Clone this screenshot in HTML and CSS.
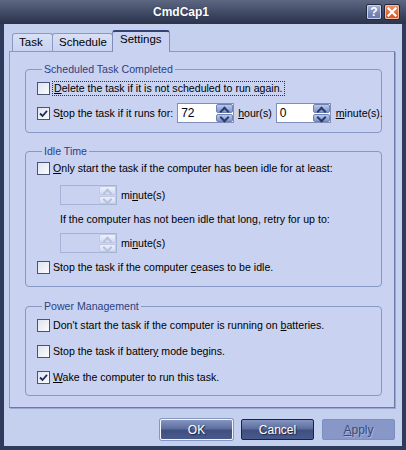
FILE: index.html
```html
<!DOCTYPE html>
<html>
<head>
<meta charset="utf-8">
<link rel="stylesheet" href="styles.css">
</head>
<body>
<div class="window">
  <div class="titlebar">
    <div class="title">CmdCap1</div>
    <div class="tb-buttons">
      <span class="tb-btn help">?</span>
      <span class="tb-btn close"><svg width="10" height="10" viewBox="0 0 10 10"><path d="M1.5 1.5 L8.5 8.5 M8.5 1.5 L1.5 8.5" stroke="#fff" stroke-width="2.2" stroke-linecap="square"/></svg></span>
    </div>
  </div>
  <div class="client">
    <div class="tabs">
      <div class="tab">Task</div>
      <div class="tab">Schedule</div>
      <div class="tab active">Settings</div>
    </div>
    <div class="panel">
      <fieldset class="group g1">
        <legend>Scheduled Task Completed</legend>
        <div class="row r-first">
          <span class="cb"></span><span class="label focus"><u>D</u>elete the task if it is not scheduled to run again.</span>
        </div>
        <div class="row r-spin">
          <span class="cb checked"><svg width="9" height="9" viewBox="0 0 9 9"><path d="M1 4.5 L3.5 7 L8 1.8" fill="none" stroke="#1e2f5e" stroke-width="1.8"/></svg></span><span class="label">S<u>t</u>op the task if it runs for:</span>
          <span class="spin s-hours"><span class="spin-field">72</span><span class="spin-btns"><span class="sb up"></span><span class="sb down"></span></span></span>
          <span class="label unit"><u>h</u>our(s)</span>
          <span class="spin s-min"><span class="spin-field">0</span><span class="spin-btns"><span class="sb up"></span><span class="sb down"></span></span></span>
          <span class="label unit2"><u>m</u>inute(s).</span>
        </div>
      </fieldset>

      <fieldset class="group g2">
        <legend>Idle Time</legend>
        <div class="row r-idle1">
          <span class="cb"></span><span class="label"><u>O</u>nly start the task if the computer has been idle for at least:</span>
        </div>
        <div class="row indent r-idlespin">
          <span class="spin disabled"><span class="spin-field"></span><span class="spin-btns"><span class="sb up"></span><span class="sb down"></span></span></span>
          <span class="label unit">mi<u>n</u>ute(s)</span>
        </div>
        <div class="row indent r-text">
          <span class="label">If the computer has not been idle that long, retry for up to:</span>
        </div>
        <div class="row indent r-idlespin2">
          <span class="spin disabled"><span class="spin-field"></span><span class="spin-btns"><span class="sb up"></span><span class="sb down"></span></span></span>
          <span class="label unit">mi<u>n</u>ute(s)</span>
        </div>
        <div class="row r-idle2">
          <span class="cb"></span><span class="label">Stop the task if the computer <u>c</u>eases to be idle.</span>
        </div>
      </fieldset>

      <fieldset class="group g3">
        <legend>Power Management</legend>
        <div class="row r-p1">
          <span class="cb"></span><span class="label">Don't start the task if the computer is running on <u>b</u>atteries.</span>
        </div>
        <div class="row r-p2">
          <span class="cb"></span><span class="label">Stop the task if batter<u>y</u> mode begins.</span>
        </div>
        <div class="row r-p3">
          <span class="cb checked"><svg width="9" height="9" viewBox="0 0 9 9"><path d="M1 4.5 L3.5 7 L8 1.8" fill="none" stroke="#1e2f5e" stroke-width="1.8"/></svg></span><span class="label"><u>W</u>ake the computer to run this task.</span>
        </div>
      </fieldset>
    </div>
    <div class="buttons">
      <span class="btn default">OK</span>
      <span class="btn cancel">Cancel</span>
      <span class="btn disabled"><u>A</u>pply</span>
    </div>
  </div>
</div>
</body>
</html>
```

FILE: styles.css
```css
* { box-sizing: border-box; }
html, body { margin: 0; padding: 0; }
body {
  width: 406px;
  height: 450px;
  overflow: hidden;
  font-family: "Liberation Sans", Arial, sans-serif;
  font-size: 10.6px;
  color: #000;
}
.window {
  width: 406px;
  height: 450px;
  background: #2f3b5c;
  display: flex;
  flex-direction: column;
}
.titlebar {
  height: 24px;
  display: flex;
  align-items: center;
  background: linear-gradient(#5d6782 0%, #4a5470 35%, #38415b 70%, #2c344c 100%);
  padding: 0 6px 0 4px;
}
.title {
  flex: 1;
  text-align: center;
  color: #fff;
  font-weight: bold;
  font-size: 12px;
  padding-right: 8px;
  text-shadow: 0 0 1px #1d2438;
}
.tb-buttons { display: flex; gap: 2px; }
.tb-btn {
  width: 16px;
  height: 16px;
  border-radius: 2px;
  display: flex;
  align-items: center;
  justify-content: center;
  color: #fff;
  font-weight: bold;
  font-size: 12px;
  border: 1px solid #232a3e;
}
.help {
  background: linear-gradient(#a6b2d6, #7584b4 60%, #6676a8);
  box-shadow: inset 0 0 0 1px #c7d0ec;
}
.close {
  background: linear-gradient(#f39a6e, #e06a3c 55%, #d4562a);
  box-shadow: inset 0 0 0 1px #f7b99a;
}
.client {
  flex: 1;
  margin: 0 4px 4px 4px;
  background: #c5cfee;
  padding: 6px 7px 0 5px;
  display: flex;
  flex-direction: column;
}
.tabs {
  display: flex;
  align-items: flex-end;
  height: 21px;
  padding-left: 3px;
  position: relative;
  z-index: 1;
}
.tab {
  height: 18px;
  padding: 0 6px;
  border: 1px solid #8b99c2;
  border-bottom: none;
  border-radius: 3px 3px 0 0;
  background: linear-gradient(#d9e0f6, #c9d2f0);
  line-height: 17px;
  font-size: 11.5px;
  margin-right: -1px;
}
.tab:nth-child(1) { width: 41px; padding-left: 6px; }
.tab:nth-child(2) { width: 61px; padding-left: 6px; }
.tab.active {
  width: 58px;
  height: 22px;
  margin-bottom: -1px;
  background: #c9d2f0;
  border-color: #7f8db8;
  border-top: 2px solid #334272;
  line-height: 15px;
  padding-left: 7px;
}
.panel {
  height: 357px;
  border: 1px solid #8b99c2;
  border-right-color: #6c7aa6;
  border-bottom-color: #6c7aa6;
  box-shadow: 1px 1px 0 #9aa7cf;
  background: #c9d2f0;
  padding: 11px 12px 0 15px;
}
.group {
  margin: 0;
  border: 1px solid #8898c4;
  border-radius: 4px;
  padding: 0 0 0 11px;
  min-width: 0;
}
.group legend {
  margin-left: 5px;
  padding: 0 2px;
  line-height: 13px;
  color: #2d3f82;
  font-size: 10.6px;
}
.g1 { padding-bottom: 9px; }
.g2 { margin-top: 12px; padding-bottom: 11px; }
.g3 { margin-top: 13px; padding-bottom: 10px; }
.row {
  display: flex;
  align-items: center;
  height: 15px;
}
.row.indent { padding-left: 23px; }
.r-first { margin-top: 5px; }
.r-spin { margin-top: 7px; height: 20px; }
.r-idle1 { margin-top: 3px; }
.r-idlespin { margin-top: 9px; height: 20px; }
.r-text { margin-top: 8px; height: 13px; }
.r-idlespin2 { margin-top: 7px; height: 20px; }
.r-idle2 { margin-top: 7px; }
.r-p1 { margin-top: 5px; }
.r-p2 { margin-top: 11px; }
.r-p3 { margin-top: 11px; }

.cb {
  width: 13px;
  height: 13px;
  flex: none;
  border: 1px solid #46547a;
  background: linear-gradient(135deg, #dfe3ee, #fbfcfe);
  display: flex;
  align-items: center;
  justify-content: center;
  margin-right: 3px;
}
.label { white-space: nowrap; line-height: 13px; }
.label.focus { outline: 1px dotted #333; outline-offset: 0; padding: 0 1px; }
u { text-decoration: underline; text-underline-offset: 1px; }

.spin {
  display: flex;
  height: 20px;
  margin-left: 4px;
  flex: none;
  border: 1px solid #7f8fba;
  background: #fff;
}
.spin-field {
  width: 38px;
  padding: 2px 0 0 3px;
  font-size: 12px;
}
.s-min .spin-field { width: 36px; }
.spin-btns {
  width: 17px;
  display: flex;
  flex-direction: column;
  gap: 1px;
  background: #fff;
}
.sb {
  flex: 1;
  border-radius: 2px;
  background: linear-gradient(#b9c8ec, #7d93cb);
  border: 1px solid #6f82b6;
  position: relative;
}
.sb::after {
  content: "";
  position: absolute;
  left: 4px;
  width: 5px;
  height: 5px;
  border-left: 2px solid #2b3a66;
  border-top: 2px solid #2b3a66;
}
.sb.up::after { top: 3px; transform: rotate(45deg); }
.sb.down::after { top: -1px; transform: rotate(225deg); }
.spin.disabled {
  border-color: #a6b2d8;
  background: #c9d2f0;
  margin-left: 0;
}
.spin.disabled .spin-field { width: 38px; }
.spin.disabled .spin-btns { background: #c9d2f0; }
.spin.disabled .sb {
  background: linear-gradient(#eef1fb, #d4dbf2);
  border-color: #c0c9e6;
}
.spin.disabled .sb::after { border-color: #b8c0da; }
.unit { margin-left: 4px; }
.unit2 { margin-left: 5px; }

.buttons {
  display: flex;
  justify-content: flex-end;
  gap: 8px;
  margin-top: 11px;
}
.btn {
  width: 73px;
  height: 21px;
  display: flex;
  align-items: center;
  justify-content: center;
  color: #fff;
  font-size: 12px;
  text-shadow: 1px 1px 1px #1b2546;
  border-radius: 2px;
  background: linear-gradient(#8595c0 0%, #5d6e9e 45%, #3f4f80 55%, #485a8c 100%);
}
.btn.default { border: 1px solid #f4f6ff; box-shadow: 0 0 0 1px #8694c0; }
.btn.cancel { border: 1px solid #18234a; }
.btn.disabled {
  background: #8697c8;
  border: 1px solid #7d8ec0;
  color: #3d4a78;
  text-shadow: 1px 1px 0 #a6b4dc;
}
```
